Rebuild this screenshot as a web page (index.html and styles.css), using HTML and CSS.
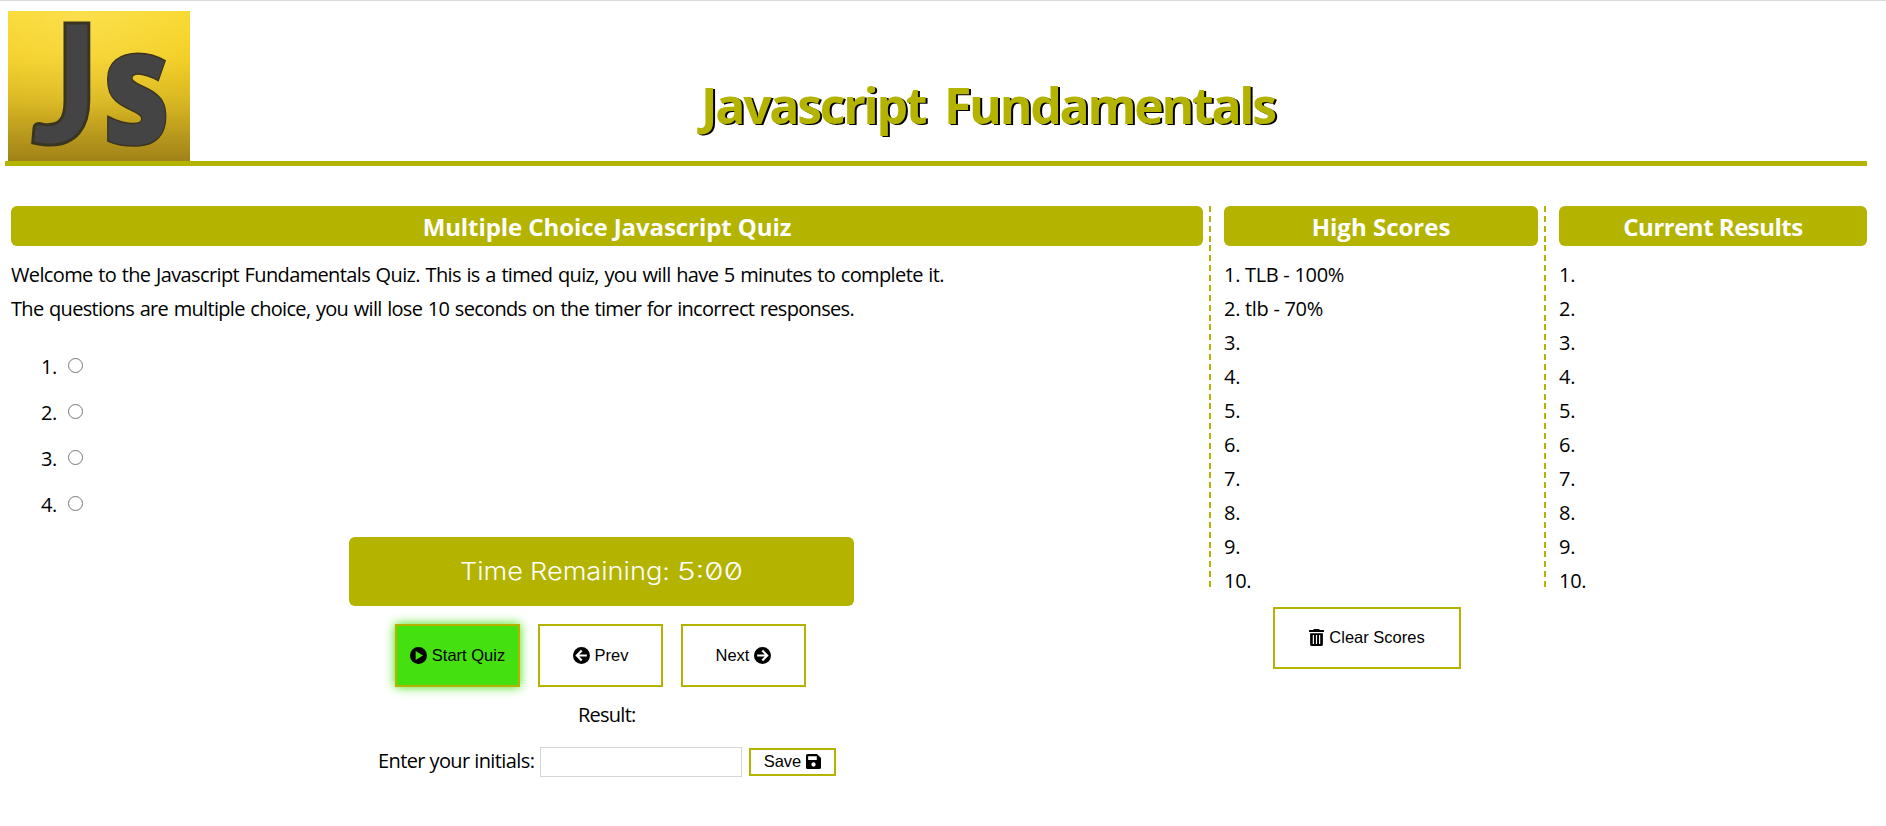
FILE: index.html
```html
<!DOCTYPE html>
<html lang="en">
<head>
<meta charset="utf-8">
<title>Javascript Fundamentals</title>
<link rel="stylesheet" href="styles.css">
</head>
<body>
<header class="header">
  <svg class="logo" width="182" height="150" viewBox="0 0 182 150">
    <defs>
      <linearGradient id="gold" x1="0" y1="0" x2="0" y2="1">
        <stop offset="0" stop-color="#f9d92e"/>
        <stop offset=".3" stop-color="#f3cf24"/>
        <stop offset=".6" stop-color="#d9b722"/>
        <stop offset="1" stop-color="#a08219"/>
      </linearGradient>
      <radialGradient id="shine" cx=".4" cy="0" r=".75">
        <stop offset="0" stop-color="#ffe97a" stop-opacity=".4"/>
        <stop offset="1" stop-color="#ffe97a" stop-opacity="0"/>
      </radialGradient>
    </defs>
    <rect width="182" height="150" fill="url(#gold)"/>
    <rect width="182" height="150" fill="url(#shine)"/>
    <g class="logo-text">
      <text class="logo-j" transform="translate(23 133) scale(.96 1)" font-size="166">J</text>
      <text class="logo-s" transform="translate(94 133) scale(.83 1)" font-size="161">s</text>
    </g>
  </svg>
  <h1 class="title">Javascript Fundamentals</h1>
</header>
<main class="columns">
  <section class="quiz">
    <h2 class="bar bar-quiz">Multiple Choice Javascript Quiz</h2>
    <p class="intro"><span class="line-1">Welcome to the Javascript Fundamentals Quiz. This is a timed quiz, you will have 5 minutes to complete it.</span><br><span class="line-2">The questions are multiple choice, you will lose 10 seconds on the timer for incorrect responses.</span></p>
    <div class="options">
      <label class="option">1.<input type="radio" name="a"></label>
      <label class="option">2.<input type="radio" name="a"></label>
      <label class="option">3.<input type="radio" name="a"></label>
      <label class="option">4.<input type="radio" name="a"></label>
    </div>
    <div class="timer">
      <svg width="505" height="69" viewBox="0 0 505 69">
        <text x="111" y="43" textLength="63" lengthAdjust="spacingAndGlyphs">Time</text>
        <text x="181" y="43" textLength="140" lengthAdjust="spacingAndGlyphs">Remaining:</text>
        <text x="328" y="43" textLength="66" lengthAdjust="spacingAndGlyphs">5:00</text>
      </svg>
    </div>
    <div class="buttons">
      <button class="btn start"><svg class="icon" viewBox="0 0 16 16"><circle cx="8" cy="8" r="8"/><path class="cut-fill" d="M5.300 3.700v8.600l7-4.300z"/></svg><span>Start Quiz</span></button>
      <button class="btn"><svg class="icon" viewBox="0 0 16 16"><circle cx="8" cy="8" r="8"/><path class="cut" d="M13 8H4M8.200 3.400L3.600 8l4.600 4.600"/></svg><span>Prev</span></button>
      <button class="btn"><span>Next</span><svg class="icon" viewBox="0 0 16 16"><circle cx="8" cy="8" r="8"/><path class="cut" d="M3 8h9M7.800 3.400L12.400 8l-4.600 4.600"/></svg></button>
    </div>
    <p class="result">Result:</p>
    <div class="initials">
      <label class="initials-label" for="initials">Enter your initials:</label>
      <input id="initials" class="field" type="text">
      <button class="btn save"><span>Save</span><svg class="icon disk" viewBox="0 0 16 16"><path fill-rule="evenodd" d="M1.700 0h10L16 4.200V14.300a1.700 1.700 0 0 1-1.700 1.700H1.700A1.700 1.700 0 0 1 0 14.300V1.700A1.700 1.700 0 0 1 1.700 0zM2.300 2.300v4.200h9.200V2.300zM8 8.900a2.300 2.300 0 1 0 0 4.600 2.300 2.300 0 0 0 0-4.600z"/></svg></button>
    </div>
  </section>
  <section class="scores">
    <div class="divided">
      <h2 class="bar bar-scores">High Scores</h2>
      <div class="list"><div>1. TLB - 100%</div><div>2. tlb - 70%</div><div>3.</div><div>4.</div><div>5.</div><div>6.</div><div>7.</div><div>8.</div><div>9.</div><div>10.</div></div>
    </div>
    <button class="btn clear"><svg class="icon trash" viewBox="0 0 14 16"><path fill-rule="evenodd" d="M4.600 0h4.800l.7 1H14v1.900H0V1h3.900zM1 4h12v10.500a1.500 1.500 0 0 1-1.500 1.500h-9A1.500 1.500 0 0 1 1 14.500zM3.500 5.600v8.400h1.100V5.600zM6.450 5.600v8.400h1.100V5.600zM9.400 5.600v8.400h1.100V5.600z"/></svg><span>Clear Scores</span></button>
  </section>
  <section class="current">
    <div class="divided">
      <h2 class="bar bar-current">Current Results</h2>
      <div class="list"><div>1.</div><div>2.</div><div>3.</div><div>4.</div><div>5.</div><div>6.</div><div>7.</div><div>8.</div><div>9.</div><div>10.</div></div>
    </div>
  </section>
</main>
</body>
</html>
```
FILE: styles.css
```css
* { box-sizing: border-box; }
body {
  margin: 0;
  height: 826px;
  border-top: 1px solid #dbd9dc;
  background: #fff;
  color: #000;
  font: 20px/34px "Open Sans", "Noto Sans", sans-serif;
}
h1, h2, p { margin: 0; }
.header {
  display: flex;
  height: 165px;
  margin: 0 19px 0 5px;
  padding: 10px 0 0 3px;
  border-bottom: 5px solid #b3b300;
}
.logo { display: block; flex: none; overflow: visible; }
.logo-text { fill: #444; stroke: #3a3520; }
.logo-j { font-family: Lato, sans-serif; font-weight: 900; stroke-width: 3; }
.logo-s { font-family: "Open Sans", sans-serif; font-weight: 800; stroke-width: 1.5; }
.title {
  margin-left: 511px;
  padding-top: 59px;
  font-size: 50px;
  line-height: 70px;
  font-weight: 700;
  letter-spacing: -2.3px;
  word-spacing: 8px;
  color: #b3b300;
  text-shadow: 2px 1px #000;
  white-space: nowrap;
}
.columns {
  display: grid;
  grid-template-columns: 1192px 329px 323px;
  column-gap: 6px;
  margin: 40px 0 0 11px;
}
.bar {
  height: 40px;
  border-radius: 6px;
  background: #b3b300;
  color: #fff;
  font-size: 24px;
  line-height: 41px;
  font-weight: 700;
  text-align: center;
}
.bar-quiz { letter-spacing: -.08px; }
.bar-current { letter-spacing: -.5px; }
.intro { margin-top: 12px; white-space: nowrap; }
.line-1, .line-2 { word-spacing: 1px; }
.line-1 { letter-spacing: -.63px; }
.line-2 { letter-spacing: -.68px; }
.options { margin: 18px 0 0 30px; }
.option {
  display: flex;
  align-items: center;
  height: 46px;
  letter-spacing: -.5px;
}
.option input { width: 15px; height: 15px; margin: 0 0 3px 11px; }
.timer {
  width: 505px;
  height: 69px;
  margin: 9px 0 0 338px;
  border-radius: 6px;
  background: #b3b300;
}
.timer svg { display: block; }
.timer text {
  font: 350 24px Inter, sans-serif;
  font-feature-settings: "zero";
  fill: #fff;
}
.buttons { display: flex; gap: 18px; margin: 18px 0 0 384px; }
.btn {
  display: flex;
  align-items: center;
  justify-content: center;
  gap: 5px;
  width: 125px;
  height: 63px;
  padding: 0 0 1px;
  border: 2px solid #b3b300;
  background: #fff;
  color: #000;
  font: 16.5px/18px "Liberation Sans", Arial, sans-serif;
}
.start { background: #44e010; box-shadow: 0 0 10px #44e010; }
.icon { width: 17px; height: 17px; flex: none; }
.cut { fill: none; stroke: #fff; stroke-width: 2; }
.start .cut-fill { fill: #44e010; }
.result { margin: 11px 0 0 567px; letter-spacing: -.75px; }
.initials { display: flex; align-items: center; margin: 15px 0 0 367px; height: 30px; }
.initials-label { width: 162px; padding-bottom: 3px; white-space: nowrap; letter-spacing: -.6px; }
.field { width: 202px; height: 30px; border: 1px solid #d6d6d6; }
.save { width: 87px; height: 28px; margin-left: 7px; padding-bottom: 2px; }
.disk { width: 15px; height: 15px; }
.trash { width: 15px; height: 17px; }
.divided {
  height: 381px;
  padding-left: 15px;
  background: repeating-linear-gradient(#b3b300 0 6px, #fff 6px 9.87px) left top / 2px 100% no-repeat;
}
.list { padding-top: 12px; letter-spacing: -.3px; }
.clear { width: 188px; height: 62px; margin: 20px 0 0 64px; padding-bottom: 2px; }
```
